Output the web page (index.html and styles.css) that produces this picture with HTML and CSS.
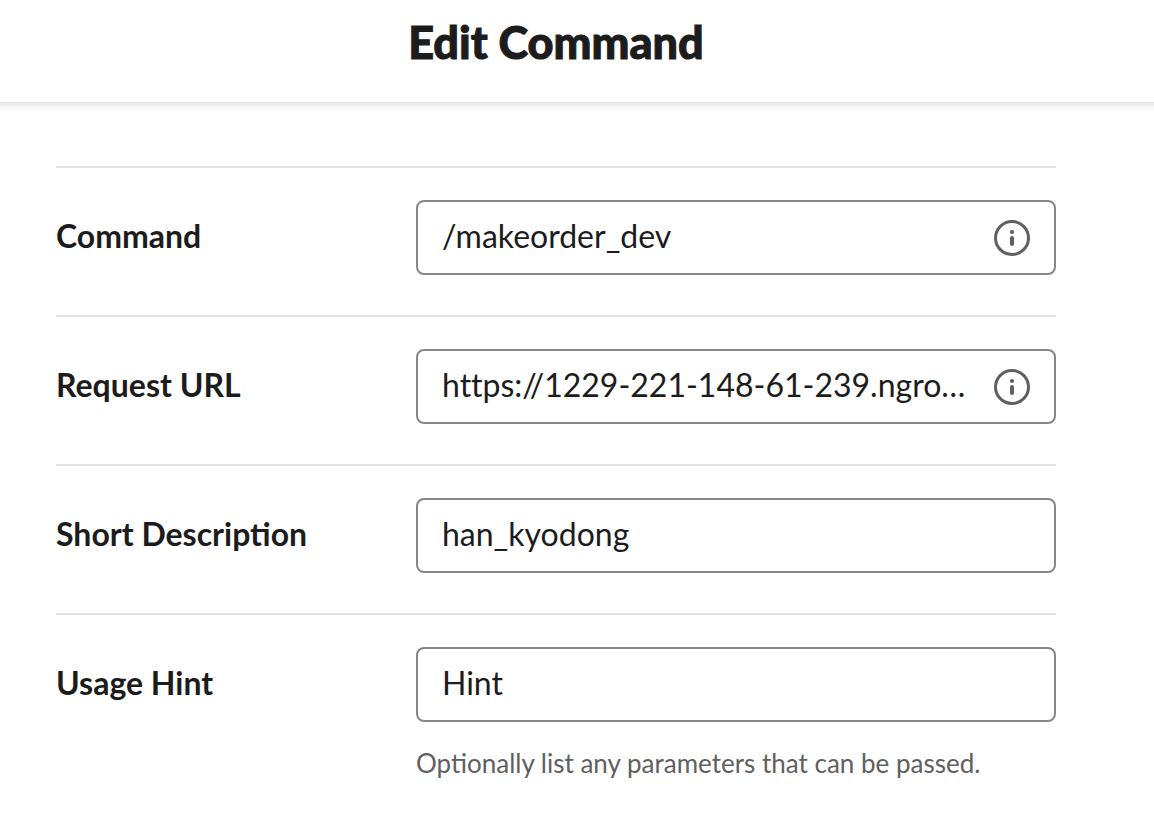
FILE: index.html
```html
<!DOCTYPE html>
<html lang="en">
<head>
    <meta charset="UTF-8">
    <meta name="viewport" content="width=device-width, initial-scale=1.0">
    <title>Edit Command</title>
    <link rel="stylesheet" href="styles.css">
</head>
<body>
    <header class="header">
        <h1 class="title">Edit Command</h1>
    </header>
    <form class="form">
        <div class="row">
            <label class="label" for="command">Command</label>
            <div class="field">
                <div class="input-box">
                    <input class="input" id="command" type="text" value="/makeorder_dev">
                    <button class="info-button" type="button" aria-label="Command info">
                        <svg class="info-icon" viewBox="0 0 36 36">
                            <circle cx="18" cy="18" r="16.5" fill="none" stroke="currentColor" stroke-width="3"/>
                            <circle cx="18" cy="12" r="2.1" fill="currentColor"/>
                            <path d="M18 18v6" stroke="currentColor" stroke-width="4" stroke-linecap="round"/>
                        </svg>
                    </button>
                </div>
            </div>
        </div>
        <div class="row">
            <label class="label" for="url">Request URL</label>
            <div class="field">
                <div class="input-box">
                    <input class="input" id="url" type="text" value="https://1229-221-148-61-239.ngrok.io">
                    <button class="info-button" type="button" aria-label="Request URL info">
                        <svg class="info-icon" viewBox="0 0 36 36">
                            <circle cx="18" cy="18" r="16.5" fill="none" stroke="currentColor" stroke-width="3"/>
                            <circle cx="18" cy="12" r="2.1" fill="currentColor"/>
                            <path d="M18 18v6" stroke="currentColor" stroke-width="4" stroke-linecap="round"/>
                        </svg>
                    </button>
                </div>
            </div>
        </div>
        <div class="row">
            <label class="label" for="description">Short Description</label>
            <div class="field">
                <div class="input-box">
                    <input class="input" id="description" type="text" value="han_kyodong">
                </div>
            </div>
        </div>
        <div class="row">
            <label class="label" for="hint">Usage Hint</label>
            <div class="field">
                <div class="input-box">
                    <input class="input" id="hint" type="text" value="Hint" aria-describedby="hint-note">
                </div>
                <p class="note" id="hint-note">Optionally list any parameters that can be passed.</p>
            </div>
        </div>
    </form>
</body>
</html>
```
FILE: styles.css
```css
* {
    box-sizing: border-box;
}

body {
    margin: 0;
    background-color: white;
    color: #1d1c1d;
    font-family: Lato, sans-serif;
}

.header {
    position: relative;
    padding: 10px 98px 28px 56px;
}

/* soft shadow under the header */
.header::after {
    content: "";
    position: absolute;
    left: 0;
    right: 0;
    top: 100%;
    height: 10px;
    background: linear-gradient(#e2e2e2, #eeeeee 30%, #fafafa 65%, white);
}

.title {
    margin: 0;
    font-size: 45px;
    line-height: 64px;
    font-weight: 900;
    text-align: center;
    -webkit-text-stroke: 1px currentColor;
}

.form {
    padding: 64px 98px 0 56px;
}

.row {
    display: grid;
    grid-template-columns: 360px 1fr;
    align-items: start;
    padding: 32px 0 40px;
    border-top: 2px solid #e1e1e1;
}

.label {
    font-size: 32px;
    line-height: 72px;
    font-weight: 700;
}

.input-box {
    display: flex;
    align-items: center;
    height: 75px;
    padding: 0 24px;
    border: 2px solid #868686;
    border-radius: 8px;
}

.input-box:focus-within {
    border-color: #1264a3;
}

.input {
    flex: 1;
    min-width: 0;
    padding: 0 0 3px;
    border: none;
    outline: none;
    background: none;
    color: inherit;
    font-family: inherit;
    font-size: 32px;
    line-height: 40px;
    font-variant-ligatures: none;
    text-overflow: ellipsis;
}

.info-button {
    flex: none;
    width: 36px;
    height: 36px;
    margin-left: 24px;
    padding: 0;
    border: none;
    background: none;
    color: #616061;
    cursor: pointer;
}

.info-icon {
    display: block;
    width: 36px;
    height: 36px;
}

.note {
    margin: 24px 0 0;
    color: #616061;
    font-size: 26px;
    line-height: 34px;
}
```
